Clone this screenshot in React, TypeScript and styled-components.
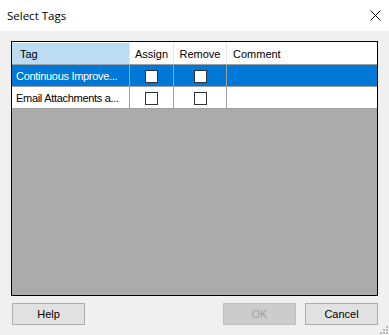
import React from 'react'
import styled, { createGlobalStyle } from 'styled-components'

const GlobalStyle = createGlobalStyle`
  html, body {
    margin: 0;
    padding: 0;
    background: #f0f0f0;
  }
  body {
    width: 389px;
    height: 335px;
    overflow: hidden;
  }
`

const Dialog = styled.div`
  width: 389px;
  height: 335px;
  display: flex;
  flex-direction: column;
  background: #f0f0f0;
  position: relative;
`

const TitleBar = styled.div`
  height: 31px;
  background: #ffffff;
  display: flex;
  align-items: center;
  justify-content: space-between;
  padding: 0 4px 0 7px;
  font-family: 'Open Sans', sans-serif;
  font-size: 11.5px;
  color: #000;
`

const CloseIcon = styled.svg`
  width: 20px;
  height: 20px;
  margin-top: -2px;
`

const Body = styled.div`
  flex: 1;
  display: flex;
  flex-direction: column;
  padding: 10px 11px 0 11px;
`

const Grid = styled.div`
  height: 253px;
  border: 1px solid #000;
  background: #ababab;
  display: flex;
  flex-direction: column;
`

const Row = styled.div<{ header?: boolean }>`
  display: grid;
  grid-template-columns: 118px 44px 53px 1fr;
  height: 21px;
  border-bottom: 1px solid #a0a0a0;
  border-top: ${p => (p.header ? '1px solid #fff' : 'none')};
  background: #fff;
  font-family: 'Liberation Sans', Arial, sans-serif;
  font-size: 11px;
`

const Cell = styled.div<{ selected?: boolean; head?: boolean; center?: boolean; pad?: number }>`
  display: flex;
  align-items: center;
  justify-content: ${p => (p.center ? 'center' : 'flex-start')};
  padding-left: ${p => p.pad ?? 0}px;
  border-right: 1px solid #a0a0a0;
  background: ${p => (p.selected ? '#0078d7' : p.head ? '#bcdcf4' : '#fff')};
  color: ${p => (p.selected ? '#fff' : '#000')};
  white-space: nowrap;
  overflow: hidden;
  &:last-child {
    border-right: none;
  }
`

const HeadCell = styled(Cell)`
  border-right: 1px solid #e5e5e5;
`

const TagText = styled.span`
  letter-spacing: -0.3px;
`

const Check = styled.span`
  width: 11px;
  height: 11px;
  border: 1px solid #333;
  background: #fff;
  margin-top: 1px;
`

const Footer = styled.div`
  display: flex;
  align-items: center;
  padding: 7px 0 0 1px;
  gap: 9px;
`

const Spacer = styled.div`
  flex: 1;
`

const Button = styled.button<{ disabled?: boolean }>`
  width: 73px;
  height: 22px;
  box-sizing: border-box;
  border: 1px solid ${p => (p.disabled ? '#bfbfbf' : '#adadad')};
  background: ${p => (p.disabled ? '#cccccc' : '#e1e1e1')};
  color: ${p => (p.disabled ? '#a0a0a0' : '#000')};
  font-family: 'Liberation Sans', Arial, sans-serif;
  font-size: 11px;
  padding: 0;
  margin: 0;
`

const Grip = styled.svg`
  position: absolute;
  right: 1px;
  bottom: 1px;
`

const tags = [
  { name: 'Continuous Improve...', selected: true },
  { name: 'Email Attachments a...', selected: false },
]

export default function App() {
  return (
    <>
      <GlobalStyle />
      <Dialog>
        <TitleBar>
          <span>Select Tags</span>
          <CloseIcon viewBox="0 0 20 20">
            <path d="M5.5 5.5 L15.5 15.5 M15.5 5.5 L5.5 15.5" stroke="#000" strokeWidth="1" fill="none" />
          </CloseIcon>
        </TitleBar>
        <Body>
          <Grid>
            <Row header>
              <HeadCell head pad={8}>Tag</HeadCell>
              <HeadCell center>Assign</HeadCell>
              <HeadCell center>Remove</HeadCell>
              <HeadCell pad={6}>Comment</HeadCell>
            </Row>
            {tags.map(t => (
              <Row key={t.name}>
                <Cell selected={t.selected} pad={4}><TagText>{t.name}</TagText></Cell>
                <Cell selected={t.selected} center><Check /></Cell>
                <Cell selected={t.selected} center><Check /></Cell>
                <Cell selected={t.selected} />
              </Row>
            ))}
          </Grid>
          <Footer>
            <Button>Help</Button>
            <Spacer />
            <Button disabled>OK</Button>
            <Button>Cancel</Button>
          </Footer>
        </Body>
        <Grip width="10" height="10" viewBox="0 0 10 10">
          {[[8, 2], [8, 5], [5, 5], [8, 8], [5, 8], [2, 8]].map(([x, y]) => (
            <rect key={`${x}-${y}`} x={x} y={y} width="2" height="2" fill="#b8b8b8" />
          ))}
        </Grip>
      </Dialog>
    </>
  )
}
